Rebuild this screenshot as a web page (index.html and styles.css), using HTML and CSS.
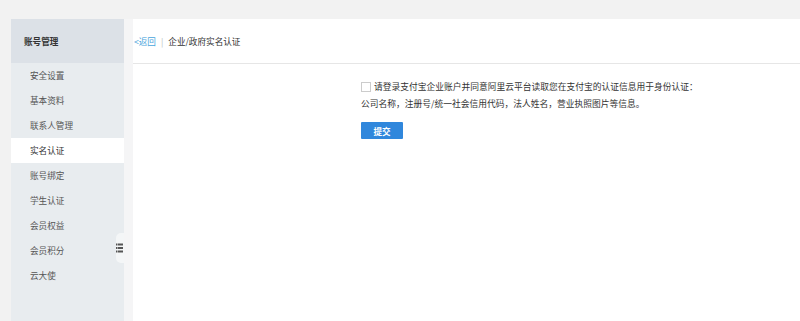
FILE: index.html
```html
<!DOCTYPE html>
<html lang="zh-CN">
<head>
<meta charset="utf-8">
<link rel="stylesheet" href="styles.css">
</head>
<body>
<div class="page">
  <aside class="sidebar">
    <div class="side-head">账号管理</div>
    <ul class="side-menu">
      <li>安全设置</li>
      <li>基本资料</li>
      <li>联系人管理</li>
      <li class="active">实名认证</li>
      <li>账号绑定</li>
      <li>学生认证</li>
      <li>会员权益</li>
      <li>会员积分</li>
      <li>云大使</li>
    </ul>
    <div class="toggle">
      <svg width="7" height="10" viewBox="0 0 7 10">
        <rect x="0" y="0.5" width="1.5" height="2" fill="#555"/>
        <rect x="2" y="0.5" width="5" height="2" fill="#555"/>
        <rect x="0" y="4" width="1.5" height="2" fill="#555"/>
        <rect x="2" y="4" width="5" height="2" fill="#555"/>
        <rect x="0" y="7.5" width="1.5" height="2" fill="#555"/>
        <rect x="2" y="7.5" width="5" height="2" fill="#555"/>
      </svg>
    </div>
  </aside>
  <main class="main">
    <div class="main-head">
      <a class="back">&lt;返回</a>
      <span class="sep">|</span>
      <span class="title">企业/政府实名认证</span>
    </div>
    <div class="content">
      <label class="agree"><span class="checkbox"></span>请登录支付宝企业账户并同意阿里云平台读取您在支付宝的认证信息用于身份认证：</label>
      <p class="info">公司名称，注册号/统一社会信用代码，法人姓名，营业执照图片等信息。</p>
      <button class="submit">提交</button>
    </div>
  </main>
</div>
</body>
</html>
```
FILE: styles.css
```css
* { box-sizing: border-box; }
html, body { margin: 0; padding: 0; }
body {
  background: #f2f2f2;
  font-family: "Noto Sans CJK SC", "Noto Sans", sans-serif;
  font-size: 8.6px;
  color: #333;
}
.page {
  display: flex;
  padding: 19px 0 0 11px;
  height: 321px;
}
.sidebar {
  position: relative;
  width: 113px;
  background: #e8ecef;
  flex: none;
}
.side-head {
  height: 44px;
  line-height: 44px;
  padding-left: 13px;
  background: #dce1e7;
  font-weight: bold;
  color: #333;
}
.side-menu {
  list-style: none;
  margin: 0;
  padding: 0;
}
.side-menu li {
  height: 25px;
  line-height: 25px;
  padding-left: 19px;
  color: #555;
}
.side-menu li.active {
  background: #fff;
  color: #333;
}
.toggle {
  position: absolute;
  right: 0;
  top: 214px;
  width: 8px;
  height: 30px;
  background: #f4f6f7;
  border-radius: 5px 0 0 5px;
  display: flex;
  align-items: center;
  justify-content: flex-end;
  padding-right: 1px;
}
.toggle svg { display: block; }
.main {
  flex: 1;
  background: #fff;
  border-left: 9px solid #f5f5f6;
}
.main-head {
  height: 45px;
  border-bottom: 1px solid #e6e6e6;
  display: flex;
  align-items: center;
  padding-left: 1px;
  padding-bottom: 1px;
}
.back { color: #4aa5dc; }
.sep { color: #bbb; margin: 0 5px 0 5px; }
.title { color: #333; }
.content {
  padding: 14px 0 0 228px;
  font-size: 8.75px;
}
.agree {
  display: flex;
  align-items: center;
  height: 17px;
  color: #333;
}
.checkbox {
  width: 10px;
  height: 10px;
  border: 1px solid #ccc;
  background: #fff;
  margin-right: 3px;
  flex: none;
}
.info {
  margin: 0;
  line-height: 17px;
  color: #333;
}
.submit {
  margin-top: 10px;
  width: 42px;
  height: 17px;
  border: 0;
  border-radius: 1px;
  background: #3087dc;
  color: #fff;
  font-family: inherit;
  font-size: 8.6px;
  font-weight: bold;
  padding: 0;
}
```
